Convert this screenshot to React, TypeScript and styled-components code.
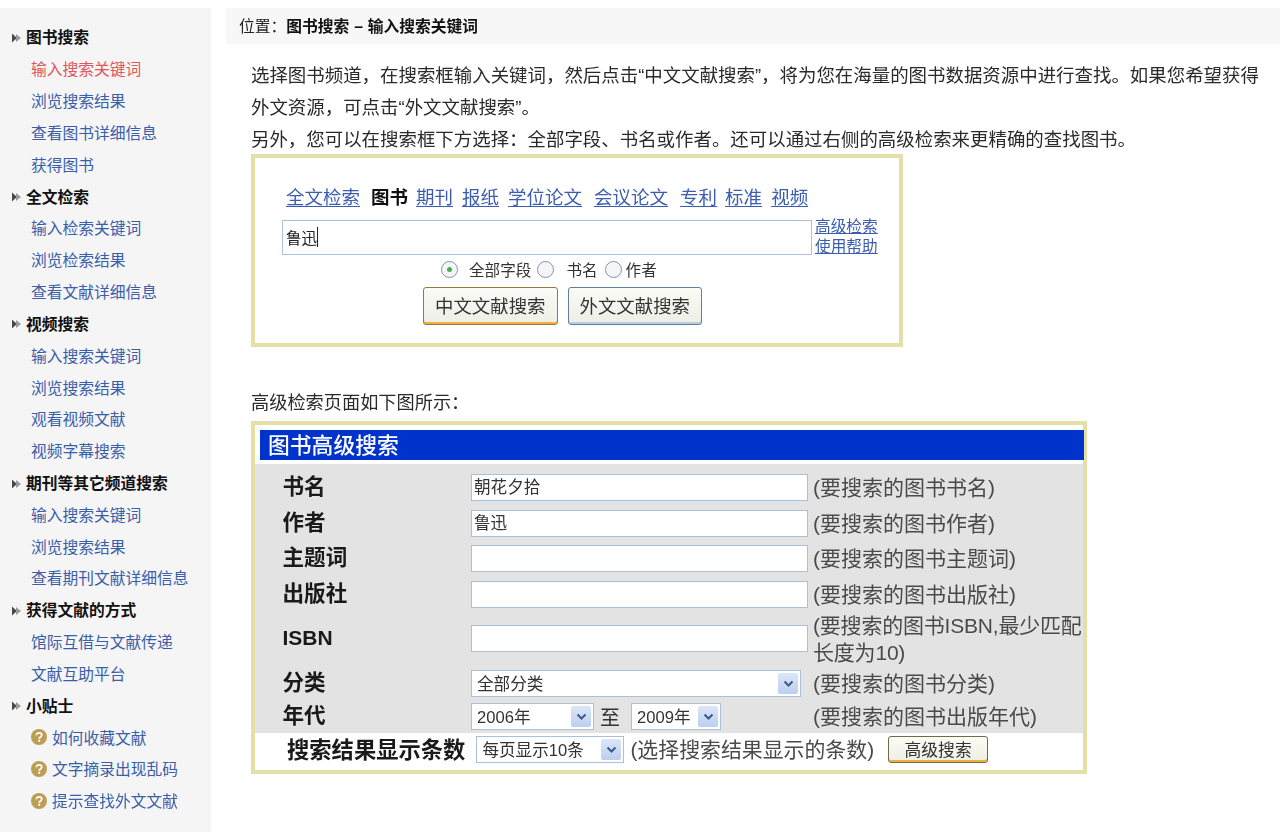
import React from "react";
import styled, { createGlobalStyle } from "styled-components";

const Global = createGlobalStyle`
  html, body { margin: 0; padding: 0; background: #fff; }
  body { font-family: "Liberation Sans", "Noto Sans CJK SC", sans-serif; color: #222; }
  * { box-sizing: border-box; }
`;

const Page = styled.div`
  display: flex;
  height: 833px;
  padding-top: 8px;
  overflow: hidden;
  filter: blur(0.3px);
`;

const Sidebar = styled.nav`
  width: 211px;
  height: 824px;
  flex: none;
  background: #f5f5f6;
  padding-top: 13px;
  font-size: 15.75px;
`;

const Heading = styled.div`
  display: flex;
  align-items: center;
  height: 31.83px;
  padding-left: 12px;
  font-weight: 700;
  color: #111;
  gap: 5px;
`;

const NavLink = styled.a<{ $active?: boolean }>`
  display: flex;
  align-items: center;
  height: 31.83px;
  padding-left: 31px;
  gap: 5px;
  color: ${(p) => (p.$active ? "#e2555a" : "#3a5ea8")};
`;

const Main = styled.main`
  flex: 1;
  margin-left: 15px;
`;

const Crumb = styled.div`
  height: 36px;
  background: #f7f7f7;
  padding: 0 0 2px 13px;
  display: flex;
  align-items: center;
  font-size: 15.75px;
  color: #222;
  white-space: nowrap;
`;

const CrumbStrong = styled.strong`
  font-weight: 700;
  color: #111;
  word-spacing: 0.5px;
`;

const Content = styled.div`
  padding: 16px 0 0 25px;
`;

const Para = styled.p`
  margin: 0;
  font-size: 18.45px;
  line-height: 32px;
  color: #2a2a2a;
  white-space: nowrap;
`;

const ShotOne = styled.section`
  width: 652px;
  height: 193px;
  margin-top: -2px;
  border: 4px solid #e3dfa6;
  background: #fff;
  padding: 26px 0 0 27px;
`;

const Tabs = styled.div`
  display: flex;
  align-items: center;
  height: 24px;
  padding-left: 4px;
  font-size: 18.5px;
`;

const TabLink = styled.a<{ $gap: number }>`
  color: #3b5db0;
  text-decoration: underline;
  text-underline-offset: 2px;
  margin-right: ${(p) => p.$gap}px;
`;

const TabCurrent = styled.b<{ $gap: number }>`
  color: #111;
  font-weight: 700;
  margin-right: ${(p) => p.$gap}px;
`;

const QueryRow = styled.div`
  display: flex;
  height: 35px;
  margin-top: 12px;
  gap: 3px;
`;

const QueryField = styled.div`
  width: 530px;
  height: 35px;
  border: 1px solid #a9c3dc;
  display: flex;
  align-items: center;
  padding: 0 0 2px 3px;
  font-size: 15.6px;
  color: #222;
`;

const Caret = styled.span`
  width: 1px;
  height: 20px;
  background: #222;
`;

const SideLinks = styled.div`
  display: flex;
  flex-direction: column;
  font-size: 15.7px;
  line-height: 20px;
  margin-top: -3px;
`;

const SideLink = styled.a`
  color: #3b5db0;
  text-decoration: underline;
`;

const RadioRow = styled.div`
  display: flex;
  align-items: center;
  height: 28px;
  padding-left: 159px;
  font-size: 15.6px;
  color: #333;
`;

const Radio = styled.span<{ $on?: boolean; $gap: number }>`
  width: 17px;
  height: 17px;
  border-radius: 50%;
  border: 1.5px solid #7d97b5;
  background: #f4f6f8;
  display: flex;
  align-items: center;
  justify-content: center;
  margin-right: ${(p) => p.$gap}px;
  &::after {
    content: "";
    width: 5px;
    height: 5px;
    border-radius: 50%;
    background: ${(p) => (p.$on ? "#43b04a" : "transparent")};
  }
`;

const RadioLabel = styled.span<{ $gap: number }>`
  margin-right: ${(p) => p.$gap}px;
`;

const Buttons = styled.div`
  display: flex;
  padding-left: 141px;
  gap: 10px;
  margin-top: 4px;
`;

const BigButton = styled.div<{ $focus?: boolean }>`
  width: 134.5px;
  height: 38px;
  padding-bottom: 2px;
  border: 1px solid ${(p) => (p.$focus ? "#9a7a3a" : "#5f7f9f")};
  border-radius: 3px;
  background: linear-gradient(#fbfbf7, #eeeee6);
  box-shadow: inset 0 -2px 0 ${(p) => (p.$focus ? "#f0b040" : "#b9cde0")};
  display: flex;
  align-items: center;
  justify-content: center;
  font-size: 18.4px;
  color: #333;
`;

const Between = styled.p`
  margin: 40px 0 0;
  font-size: 18.2px;
  line-height: 32px;
  height: 32px;
  color: #2a2a2a;
`;

const ShotTwo = styled.section`
  width: 836px;
  height: 353px;
  margin-top: 2px;
  border: 4px solid #e3dfa6;
  background: #fff;
  padding-top: 5px;
  display: flex;
  flex-direction: column;
`;

const Banner = styled.div`
  margin-left: 5px;
  width: 824px;
  height: 30px;
  background: #0033cc;
  color: #fff;
  font-size: 21.8px;
  font-weight: 500;
  padding: 0 0 3px 8px;
  display: flex;
  align-items: center;
`;

const FormGrid = styled.div`
  margin-top: 4px;
  background: #e3e3e3;
  height: 269px;
  padding-top: 5.5px;
  display: grid;
  grid-template-columns: 216px 342px 1fr;
  grid-template-rows: 36px 36px 34px 38px 50px 40px 26px;
  align-items: center;
`;

const RowLabel = styled.div<{ $latin?: boolean }>`
  padding-left: 27.5px;
  margin-bottom: ${(p) => (p.$latin ? "2px" : "6px")};
  font-size: ${(p) => (p.$latin ? "21px" : "21.6px")};
  font-weight: 700;
  color: #1a1a1a;
`;

const Cell = styled.div`
  display: flex;
  align-items: center;
`;

const Field = styled.div`
  width: 337px;
  height: 27px;
  border: 1px solid #a9c1d8;
  background: #fff;
  display: flex;
  align-items: center;
  padding: 0 0 3px 2px;
  font-size: 16.6px;
  color: #333;
`;

const Select = styled.div<{ $w: number }>`
  width: ${(p) => p.$w}px;
  height: 27px;
  border: 1px solid #a9c1d8;
  background: #fff;
  display: flex;
  align-items: center;
  justify-content: space-between;
  padding: 2px 2px 2px 5px;
  font-size: 16.6px;
  color: #333;
  flex: none;
`;

const SelectText = styled.span`
  margin-bottom: 2px;
`;

const Arrow = styled.span`
  width: 20px;
  height: 100%;
  border-radius: 2px;
  background: linear-gradient(#dbe6f8, #bccff0);
  display: flex;
  align-items: center;
  justify-content: center;
  color: #3b5a8c;
`;

const Hint = styled.div<{ $tight?: boolean }>`
  font-size: 21px;
  line-height: 27px;
  white-space: nowrap;
  letter-spacing: ${(p) => (p.$tight ? "-0.2px" : "0")};
  color: #4a4a4a;
`;

const To = styled.span`
  margin: 0 11px 0 6px;
  font-size: 20px;
  color: #333;
`;

const BottomRow = styled.div`
  height: 37px;
  display: flex;
  align-items: center;
  padding: 0 0 4px 32px;
`;

const BottomLabel = styled.b`
  font-size: 22.3px;
  font-weight: 700;
  color: #1a1a1a;
  margin: 0 11px 4px 0;
  white-space: nowrap;
`;

const BottomHint = styled.span`
  margin: 0 0 3px 6px;
  font-size: 20.9px;
  color: #4a4a4a;
  white-space: nowrap;
`;

const SmallButton = styled.div`
  width: 100px;
  height: 27px;
  margin-left: 14px;
  padding-bottom: 2px;
  flex: none;
  border: 1px solid #6e6a50;
  border-radius: 3px;
  background: linear-gradient(#fbfbf5, #efeee2);
  box-shadow: inset 0 -2px 0 #f0b040;
  display: flex;
  align-items: center;
  justify-content: center;
  font-size: 16.8px;
  color: #333;
`;

const BulletIcon = styled.svg`
  margin-top: 2px;
  flex: none;
`;

const Bullet = () => (
  <BulletIcon width="9" height="10" viewBox="0 0 9 10" aria-hidden="true">
    <path d="M0 0.5 L5 5 L0 9.5Z" fill="#4a4a4a" />
    <path d="M4 1 L9 5 L4 9Z" fill="#9a9a9a" />
  </BulletIcon>
);

const Help = () => (
  <svg width="16" height="16" viewBox="0 0 16 16" aria-hidden="true">
    <circle cx="8" cy="8" r="8" fill="#bb9d55" />
    <path d="M5.4 6.2C5.4 4.6 6.6 3.8 8 3.8s2.7.8 2.7 2.2c0 1.9-2.5 1.9-2.5 3.7" fill="none" stroke="#fff" strokeWidth="1.8" />
    <rect x="7.2" y="10.7" width="2" height="2" fill="#fff" />
  </svg>
);

const Chevron = () => (
  <svg width="11" height="8" viewBox="0 0 11 8" aria-hidden="true">
    <path d="M1.5 1.5 L5.5 5.5 L9.5 1.5" fill="none" stroke="currentColor" strokeWidth="2" />
  </svg>
);

type NavGroup = { title: string; items: string[]; help?: boolean };

const nav: NavGroup[] = [
  { title: "图书搜索", items: ["输入搜索关键词", "浏览搜索结果", "查看图书详细信息", "获得图书"] },
  { title: "全文检索", items: ["输入检索关键词", "浏览检索结果", "查看文献详细信息"] },
  { title: "视频搜索", items: ["输入搜索关键词", "浏览搜索结果", "观看视频文献", "视频字幕搜索"] },
  { title: "期刊等其它频道搜索", items: ["输入搜索关键词", "浏览搜索结果", "查看期刊文献详细信息"] },
  { title: "获得文献的方式", items: ["馆际互借与文献传递", "文献互助平台"] },
  { title: "小贴士", items: ["如何收藏文献", "文字摘录出现乱码", "提示查找外文文献"], help: true },
];

const tabs = [
  { t: "全文检索", gap: 11 },
  { t: "图书", gap: 8, current: true },
  { t: "期刊", gap: 9 },
  { t: "报纸", gap: 9 },
  { t: "学位论文", gap: 12 },
  { t: "会议论文", gap: 12 },
  { t: "专利", gap: 8 },
  { t: "标准", gap: 9 },
  { t: "视频", gap: 0 },
];

const rows = [
  { label: "书名", value: "朝花夕拾", hint: "(要搜索的图书书名)" },
  { label: "作者", value: "鲁迅", hint: "(要搜索的图书作者)" },
  { label: "主题词", value: "", hint: "(要搜索的图书主题词)" },
  { label: "出版社", value: "", hint: "(要搜索的图书出版社)" },
];

export default function App() {
  return (
    <Page>
      <Global />
      <Sidebar>
        {nav.map((g, gi) => (
          <div key={g.title}>
            <Heading>
              <Bullet />
              {g.title}
            </Heading>
            {g.items.map((it, i) => (
              <NavLink key={it} $active={gi === 0 && i === 0}>
                {g.help && <Help />}
                {it}
              </NavLink>
            ))}
          </div>
        ))}
      </Sidebar>
      <Main>
        <Crumb>
          位置：<CrumbStrong>图书搜索 – 输入搜索关键词</CrumbStrong>
        </Crumb>
        <Content>
          <Para>选择图书频道，在搜索框输入关键词，然后点击“中文文献搜索”，将为您在海量的图书数据资源中进行查找。如果您希望获得</Para>
          <Para>外文资源，可点击“外文文献搜索”。</Para>
          <Para>另外，您可以在搜索框下方选择：全部字段、书名或作者。还可以通过右侧的高级检索来更精确的查找图书。</Para>
          <ShotOne>
            <Tabs>
              {tabs.map(({ t, gap, current }) =>
                current ? (
                  <TabCurrent key={t} $gap={gap}>
                    {t}
                  </TabCurrent>
                ) : (
                  <TabLink key={t} $gap={gap}>
                    {t}
                  </TabLink>
                )
              )}
            </Tabs>
            <QueryRow>
              <QueryField>
                鲁迅
                <Caret />
              </QueryField>
              <SideLinks>
                <SideLink>高级检索</SideLink>
                <SideLink>使用帮助</SideLink>
              </SideLinks>
            </QueryRow>
            <RadioRow>
              <Radio $on $gap={11} />
              <RadioLabel $gap={6}>全部字段</RadioLabel>
              <Radio $gap={12} />
              <RadioLabel $gap={7}>书名</RadioLabel>
              <Radio $gap={4} />
              <RadioLabel $gap={0}>作者</RadioLabel>
            </RadioRow>
            <Buttons>
              <BigButton $focus>中文文献搜索</BigButton>
              <BigButton>外文文献搜索</BigButton>
            </Buttons>
          </ShotOne>
          <Between>高级检索页面如下图所示：</Between>
          <ShotTwo>
            <Banner>图书高级搜索</Banner>
            <FormGrid>
              {rows.map((r) => (
                <React.Fragment key={r.label}>
                  <RowLabel>{r.label}</RowLabel>
                  <Cell>
                    <Field>{r.value}</Field>
                  </Cell>
                  <Hint>{r.hint}</Hint>
                </React.Fragment>
              ))}
              <RowLabel $latin>ISBN</RowLabel>
              <Cell>
                <Field />
              </Cell>
              <Hint $tight>
                (要搜索的图书ISBN,最少匹配
                <br />
                长度为10)
              </Hint>
              <RowLabel>分类</RowLabel>
              <Cell>
                <Select $w={330}>
                  <SelectText>全部分类</SelectText>
                  <Arrow>
                    <Chevron />
                  </Arrow>
                </Select>
              </Cell>
              <Hint>(要搜索的图书分类)</Hint>
              <RowLabel>年代</RowLabel>
              <Cell>
                <Select $w={123}>
                  <SelectText>2006年</SelectText>
                  <Arrow>
                    <Chevron />
                  </Arrow>
                </Select>
                <To>至</To>
                <Select $w={90}>
                  <SelectText>2009年</SelectText>
                  <Arrow>
                    <Chevron />
                  </Arrow>
                </Select>
              </Cell>
              <Hint>(要搜索的图书出版年代)</Hint>
            </FormGrid>
            <BottomRow>
              <BottomLabel>搜索结果显示条数</BottomLabel>
              <Select $w={148}>
                <SelectText>每页显示10条</SelectText>
                <Arrow>
                  <Chevron />
                </Arrow>
              </Select>
              <BottomHint>(选择搜索结果显示的条数)</BottomHint>
              <SmallButton>高级搜索</SmallButton>
            </BottomRow>
          </ShotTwo>
        </Content>
      </Main>
    </Page>
  );
}
